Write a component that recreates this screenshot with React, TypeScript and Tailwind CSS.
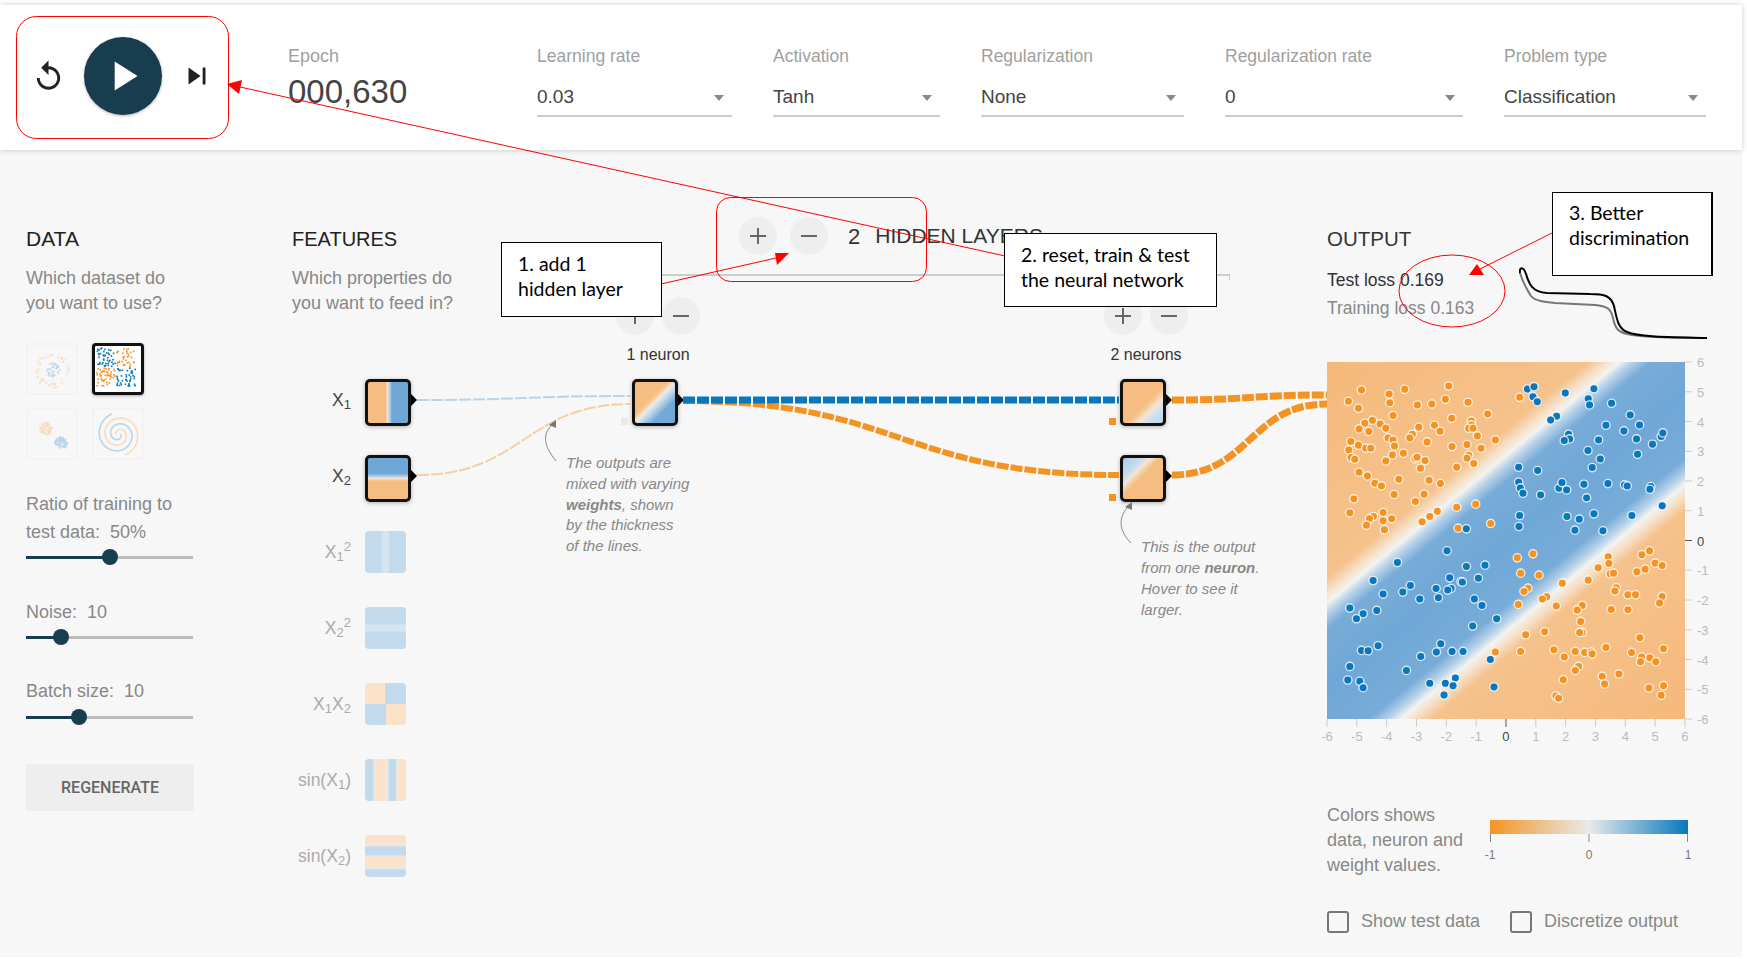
import React from 'react';
import { MdReplay, MdPlayArrow, MdSkipNext } from 'react-icons/md';

const ORANGE_DOTS = [
  [155,120],[285,118],[417,108],[116,154],[146,175],[238,132],[240,158],[323,165],[366,162],[407,148],[475,157],[534,192],[630,142],[250,197],[426,205],[165,220],[188,211],[211,222],[228,235],[148,237],[177,245],[374,226],[391,244],[327,232],[485,213],[485,225],[477,235],[490,235],[308,253],[300,264],[503,258],[557,270],[123,275],[235,264],[250,270],[352,276],[254,288],[472,284],[427,290],[146,286],[117,300],[168,295],[183,295],[514,295],[281,310],[248,315],[477,316],[472,325],[124,323],[135,328],[316,326],[322,322],[346,332],[228,333],[332,355],[441,352],[492,341],[148,367],[173,378],[267,388],[358,391],[195,400],[215,408],[392,401],[253,434],[343,433],[132,447],[317,455],[441,472],[498,463],[120,489],[220,488],[191,500],[179,507],[246,507],[220,513],[383,484],[360,500],[337,516],[170,526],[224,540],[445,535],[543,521],
  [896,621],[898,641],[866,654],[997,615],[1020,603],[1037,640],[1058,647],[1007,658],[982,666],[623,624],[670,612],[633,670],[688,676],[902,672],[912,670],[836,691],[758,700],[655,715],[643,725],[920,714],[916,724],[955,735],[978,735],[1058,740],[711,741],[698,748],[626,764],[740,769],[818,767],[803,781],[905,779],[955,780],[1050,760],[813,815],[818,848],[810,848],[705,846],[648,855],[991,864],[889,893],[1062,897],[733,900],[797,905],[825,908],[845,907],[848,913],[764,922],[966,908],[633,905],[557,907],[996,922],[1021,924],[993,936],[1039,936],[807,950],[797,962],[878,980],[928,973],[885,1003],[761,990],[1062,1008],[1018,1015],[739,1039],[747,1046],[1055,1037],
];

const BLUE_DOTS = [
  [653,117],[673,110],[670,140],[683,155],[767,129],[853,116],[836,146],[840,165],[906,160],[741,199],[723,210],[962,195],[889,226],[990,225],[943,243],[777,253],[780,267],[764,272],[867,270],[981,267],[1055,260],[1060,249],[1029,283],[835,302],[984,313],[872,327],[848,353],[627,352],[684,362],[627,397],[632,414],[640,430],[748,415],[757,398],[771,420],[823,403],[895,401],[945,405],[953,408],[693,435],[831,444],[1024,410],[1021,418],[1058,468],[630,497],[772,500],[809,508],[853,492],[967,497],[628,530],[796,541],[880,543],[470,537],
  [412,603],[263,638],[470,650],[526,646],[190,692],[420,684],[506,685],[454,695],[458,697],[302,707],[379,716],[424,716],[414,721],[279,727],[220,733],[386,744],[330,748],[494,748],[517,767],[120,775],[201,782],[160,792],[140,807],[561,807],[489,829],[393,882],[205,888],[155,902],[175,903],[380,907],[427,905],[460,905],[333,920],[542,929],[120,950],[290,962],[114,991],[150,995],[160,1014],[437,985],[407,1001],[360,1001],[430,1008],[553,1012],[403,1036],
];

const rng = (seed: number) => {
  let i = seed;
  return () => {
    i += 1;
    const v = Math.sin(i * 127.1 + seed * 311.7) * 43758.5453;
    return v - Math.floor(v);
  };
};

const scatter = (seed: number, count: number, pick: (a: number, b: number, c: number) => [number, number, string]) => {
  const next = rng(seed);
  return Array.from({ length: count }, () => pick(next(), next(), next()));
};

const circleDots = scatter(11, 100, (a, b, c) => {
  const inner = c < 0.45;
  const ang = b * Math.PI * 2;
  const r = inner ? Math.sqrt(a) * 8 : 14 + a * 5;
  return [25 + Math.cos(ang) * r, 26 + Math.sin(ang) * r, inner ? '#0877bd' : '#f59322'];
});

// quadrants: blue top left and bottom right, orange the other two
const xorDots = scatter(29, 170, (a, b) => {
  const x = 2 + a * 41;
  const y = 2 + b * 41;
  const sameSide = x < 22.5 === y < 22.5;
  return [x < 22.5 ? x - 0.8 : x + 0.8, y < 22.5 ? y - 0.8 : y + 0.8, sameSide ? '#0877bd' : '#f59322'];
});

const blobDots = scatter(47, 110, (a, b, c) => {
  const first = c < 0.5;
  const ang = b * Math.PI * 2;
  const r = Math.sqrt(a) * 6.5;
  const cx = first ? 18 : 34;
  const cy = first ? 19 : 34;
  return [cx + Math.cos(ang) * r, cy + Math.sin(ang) * r, first ? '#f59322' : '#0877bd'];
});

const spiralPath = (offset: number) => {
  const pts: string[] = [];
  for (let i = 0; i <= 70; i++) {
    const t = (i / 70) * Math.PI * 3.4;
    const r = 2 + t * 1.95;
    pts.push(`${(26 + Math.cos(t + offset) * r).toFixed(1)},${(26 + Math.sin(t + offset) * r).toFixed(1)}`);
  }
  return 'M' + pts.join(' L');
};

const Dots = ({ items, size }: { items: [number, number, string][]; size: number }) => (
  <svg viewBox="0 0 51 51" className="h-full w-full">
    {items.map((d, i) => (
      <rect key={i} x={d[0]} y={d[1]} width={size} height={size} fill={d[2]} />
    ))}
  </svg>
);

const Thumb = ({ children, selected }: { children: React.ReactNode; selected?: boolean }) => (
  <div
    className={
      selected
        ? 'h-[52px] w-[52px] overflow-hidden rounded-[4px] border-[3px] border-[#111] bg-white shadow-[0_1px_3px_rgba(0,0,0,0.3)]'
        : 'h-[52px] w-[52px] overflow-hidden rounded-[3px] border-2 border-[#f3f3f3]'
    }
  >
    {children}
  </div>
);

const Slider = ({ pos }: { pos: number }) => (
  <div className="relative h-4 w-[167px]">
    <div className="absolute inset-x-0 top-[6.5px] h-[3px] bg-[#bbb]" />
    <div className="absolute left-0 top-[6.5px] h-[3px] bg-[#183d4e]" style={{ width: pos }} />
    <div className="absolute top-0 h-4 w-4 rounded-full bg-[#183d4e]" style={{ left: pos - 8 }} />
  </div>
);

const Select = ({ label, value, width }: { label: string; value: string; width: string }) => (
  <div className={width}>
    <div className="h-[22px] text-[17.5px] leading-[22px] text-[#a0a0a0]">{label}</div>
    <div className="mt-[9px] flex h-[41px] items-center justify-between border-b-2 border-[#ccc] pr-[8px] pt-[4px] text-[19px] text-[#444]">
      <span>{value}</span>
      <span className="h-0 w-0 border-x-[5px] border-t-[6px] border-x-transparent border-t-[#888]" />
    </div>
  </div>
);

const features = [
  { label: <>X<sub>1</sub></>, active: true, bg: 'bg-[linear-gradient(90deg,#f5bd80_0%,#f5bd80_44%,#f3e4d2_49%,#b5d1e8_54%,#6fa8d6_60%,#6fa8d6_100%)]' },
  { label: <>X<sub>2</sub></>, active: true, bg: 'bg-[linear-gradient(180deg,#6fa8d6_0%,#6fa8d6_38%,#b5d1e8_45%,#f3e4d2_50%,#f5bd80_56%,#f5bd80_100%)]' },
  { label: <>X<sub>1</sub><sup>2</sup></>, bg: 'bg-[linear-gradient(90deg,#c3daec_0%,#c3daec_38%,#d6e5f1_44%,#d6e5f1_56%,#c3daec_62%,#c3daec_100%)]' },
  { label: <>X<sub>2</sub><sup>2</sup></>, bg: 'bg-[linear-gradient(180deg,#c3daec_0%,#c3daec_38%,#d6e5f1_44%,#d6e5f1_56%,#c3daec_62%,#c3daec_100%)]' },
  { label: <>X<sub>1</sub>X<sub>2</sub></>, bg: 'bg-[conic-gradient(#c3daec_0_25%,#fbe2c8_25%_50%,#c3daec_50%_75%,#fbe2c8_75%_100%)]' },
  { label: <>sin(X<sub>1</sub>)</>, bg: 'bg-[linear-gradient(90deg,#c3daec_0%,#c3daec_18%,#edeae6_24%,#fbe2c8_30%,#fbe2c8_48%,#edeae6_54%,#c3daec_60%,#c3daec_74%,#edeae6_78%,#fbe2c8_84%,#fbe2c8_100%)]' },
  { label: <>sin(X<sub>2</sub>)</>, bg: 'bg-[linear-gradient(180deg,#fbe2c8_0%,#fbe2c8_16%,#edeae6_24%,#c3daec_30%,#c3daec_46%,#edeae6_52%,#fbe2c8_56%,#fbe2c8_72%,#edeae6_78%,#c3daec_84%,#c3daec_100%)]' },
];

const NodeBox = ({ bg, bias }: { bg: string; bias?: string }) => (
  <div className="relative h-[47px] w-[52px]">
    <div className={`h-[47px] w-[46px] rounded-[5px] border-[3px] border-[#111] shadow-[0_1px_4px_rgba(0,0,0,0.3)] ${bg}`} />
    <span className="absolute right-0 top-[15px] h-0 w-0 border-y-[6px] border-l-[6px] border-y-transparent border-l-black" />
    {bias && <span className={`absolute -left-[11px] top-[39px] h-[7px] w-[7px] ${bias}`} />}
  </div>
);

const RoundBtn = ({ sign }: { sign: string }) => (
  <div className="flex h-[38px] w-[38px] items-center justify-center rounded-full bg-[#eee] text-[#666]">
    {sign === '+' ? (
      <svg width="16" height="16" viewBox="0 0 16 16"><path d="M8 0v16M0 8h16" stroke="currentColor" strokeWidth="2" /></svg>
    ) : (
      <svg width="16" height="16" viewBox="0 0 16 16"><path d="M0 8h16" stroke="currentColor" strokeWidth="2" /></svg>
    )}
  </div>
);

const Layer = ({ label, children }: { label: string; children: React.ReactNode }) => (
  <div className="flex w-[84px] flex-col items-center">
    <div className="flex gap-2">
      <RoundBtn sign="+" />
      <RoundBtn sign="-" />
    </div>
    <div className="mt-[10px] whitespace-nowrap text-[16px] leading-5 text-[#333]">{label}</div>
    <div className="mt-[14px] flex flex-col gap-[29px]">{children}</div>
  </div>
);

const AXIS = [-6, -5, -4, -3, -2, -1, 0, 1, 2, 3, 4, 5, 6];

const Heatmap = () => (
  <div className="relative h-[357px] w-[358px] bg-[linear-gradient(140.5deg,#f5b97a_0%,#f5c28c_33%,#f6e2cc_35.5%,#f3f3f0_37%,#b9d3e9_38.5%,#78acd8_41%,#6fa7d6_50%,#78acd8_60%,#b9d3e9_62.5%,#f3f3f0_64%,#f6e2cc_65.5%,#f5c28c_68%,#f5b97a_100%)]">
    <svg viewBox="52 36 1074 1072" className="absolute inset-0 h-full w-full">
      {ORANGE_DOTS.map(([x, y], i) => (
        <circle key={i} cx={x} cy={y} r={12.5} fill="#f59322" stroke="#fff" strokeOpacity={0.8} strokeWidth={4} />
      ))}
      {BLUE_DOTS.map(([x, y], i) => (
        <circle key={i} cx={x} cy={y} r={12.5} fill="#0877bd" stroke="#fff" strokeOpacity={0.8} strokeWidth={4} />
      ))}
    </svg>
    {/* axis ticks and numbers around the plot */}
    <svg width="400" height="400" className="absolute left-0 top-0 overflow-visible text-[13px]">
      {AXIS.map((v) => {
        const x = (v + 6) * 29.83;
        const y = (6 - v) * 29.75;
        const zero = v === 0;
        return (
          <g key={v} fill={zero ? '#444' : '#bbb'}>
            <line x1={358} x2={365} y1={y} y2={y} stroke={zero ? '#555' : '#ccc'} />
            <text x={370} y={y + 5}>{v}</text>
            <line x1={x} x2={x} y1={357} y2={365} stroke={zero ? '#555' : '#ccc'} />
            <text x={x} y={379} textAnchor="middle">{v}</text>
          </g>
        );
      })}
    </svg>
  </div>
);

const Checkbox = ({ label, width }: { label: string; width?: string }) => (
  <div className={`flex items-center gap-3 ${width ?? ''}`}>
    <span className="h-[22px] w-[22px] rounded-[3px] border-[2.5px] border-[#777]" />
    <span className="whitespace-nowrap text-[18px] text-[#888]">{label}</span>
  </div>
);

const Callout = ({ className, lines }: { className: string; lines: string[] }) => (
  <div className={`absolute border border-black bg-white font-['Lato',sans-serif] text-[19.5px] leading-[24.5px] text-black ${className}`}>
    {lines.map((l) => (
      <div key={l}>{l}</div>
    ))}
  </div>
);

const App: React.FC = () => {
  return (
    <div className="relative h-[959px] w-[1747px] overflow-hidden bg-white font-['Liberation_Sans',sans-serif]">
      <div className="h-[957px] w-[1742px] bg-[#f7f7f7] pt-[5px]">
        {/* Top bar */}
        <div className="relative z-20 -mt-[5px] mb-0 h-[150px] bg-white pt-[5px]">
          <header className="flex h-[145px] items-start bg-white shadow-[0_0_6px_rgba(0,0,0,0.2)]">
            <div className="flex h-[142px] w-[288px] items-center">
              <MdReplay size={35} className="ml-[31px] text-[#222]" />
              <div className="ml-[18px] flex h-[78px] w-[78px] items-center justify-center rounded-full bg-[#183d4e] shadow-[0_1px_3px_rgba(0,0,0,0.3)]">
                <MdPlayArrow size={50} className="text-white" />
              </div>
              <MdSkipNext size={34} className="ml-[18px] text-[#222]" />
            </div>
            <div className="flex gap-[41px] pt-[40px]">
              <div className="w-[208px]">
                <div className="h-[22px] text-[18px] leading-[22px] text-[#a0a0a0]">Epoch</div>
                <div className="mt-[7px] text-[33px] leading-9 text-[#444]">000,630</div>
              </div>
              <Select label="Learning rate" value="0.03" width="w-[195px]" />
              <Select label="Activation" value="Tanh" width="w-[167px]" />
              <Select label="Regularization" value="None" width="w-[203px]" />
              <Select label="Regularization rate" value="0" width="w-[238px]" />
              <Select label="Problem type" value="Classification" width="w-[202px]" />
            </div>
          </header>
        </div>

        {/* Main columns */}
        <main className="relative z-10 flex pt-[76px]">
          <section className="w-[292px] pl-[26px]">
            <h2 className="text-[21px] leading-[26px] text-[#222]">DATA</h2>
            <p className="mt-[14px] text-[18px] leading-[25px] text-[#888]">Which dataset do<br />you want to use?</p>
            <div className="mt-[27px] grid w-[120px] grid-cols-[52px_52px] gap-x-[14px] gap-y-[13px]">
              <Thumb>
                <div className="h-full w-full opacity-25"><Dots items={circleDots} size={1.6} /></div>
              </Thumb>
              <Thumb selected>
                <Dots items={xorDots} size={1.8} />
              </Thumb>
              <Thumb>
                <div className="h-full w-full opacity-25"><Dots items={blobDots} size={2} /></div>
              </Thumb>
              <Thumb>
                <svg viewBox="0 0 51 51" className="h-full w-full opacity-25" fill="none" strokeWidth="1.8">
                  <path d={spiralPath(0)} stroke="#0877bd" />
                  <path d={spiralPath(Math.PI)} stroke="#f59322" />
                </svg>
              </Thumb>
            </div>
            <p className="mt-[31px] text-[18px] leading-[27.5px] text-[#888]">Ratio of training to<br />test data:&nbsp; 50%</p>
            <div className="mt-[3px]"><Slider pos={84} /></div>
            <p className="mt-[34px] text-[18px] leading-[27px] text-[#888]">Noise:&nbsp; 10</p>
            <div className="mt-[3px]"><Slider pos={35} /></div>
            <p className="mt-[33px] text-[18px] leading-[27px] text-[#888]">Batch size:&nbsp; 10</p>
            <div className="mt-1"><Slider pos={53} /></div>
            <button className="mt-[39px] h-[47px] w-[168px] rounded-[3px] bg-[#eee] font-['Roboto',sans-serif] text-[16px] font-medium text-[#666]">REGENERATE</button>
          </section>

          <section className="w-[170px]">
            <h2 className="text-[20px] leading-[26px] text-[#222]">FEATURES</h2>
            <p className="mt-[14px] whitespace-nowrap text-[18px] leading-[25px] text-[#888]">Which properties do<br />you want to feed in?</p>
            <div className="mt-[63px]">
              {features.map((f, i) => (
                <div key={i} className="flex h-[76px] items-start gap-[14px]">
                  <div className={`flex h-[42px] w-[59px] items-center justify-end whitespace-nowrap text-[17.5px] ${f.active ? 'text-[#444]' : 'text-[#aaa]'}`}>
                    <span>{f.label}</span>
                  </div>
                  {f.active ? (
                    <NodeBox bg={f.bg} />
                  ) : (
                    <div className={`h-[42px] w-[41px] rounded-[4px] ${f.bg}`} />
                  )}
                </div>
              ))}
            </div>
          </section>

          <section className="-mt-[9px] w-[865px]">
            <div className="flex items-center pl-[277px]">
              <div className="flex gap-[13px]">
                <RoundBtn sign="+" />
                <RoundBtn sign="-" />
              </div>
              <span className="ml-5 text-[22px] text-[#333]">2</span>
              <span className="ml-[15px] whitespace-nowrap text-[21px] text-[#333]">HIDDEN LAYERS</span>
            </div>
            <div className="ml-[188px] mt-[19px] h-[6px] w-[580px] border-r border-t-2 border-[#ccc]" />
            <div className="mt-[17px] flex gap-[404px] pl-[154px]">
              <Layer label="1 neuron">
                <NodeBox bias="bg-[#e8e8e8]" bg="bg-[linear-gradient(135deg,#f5bd80_0%,#f5bd80_40%,#f3e6d8_49%,#d3e3f0_54%,#72a9d7_72%,#6fa8d6_100%)]" />
              </Layer>
              <Layer label="2 neurons">
                <NodeBox bias="bg-[#f59322]" bg="bg-[linear-gradient(135deg,#f5bd80_0%,#f5bd80_55%,#f3e5d6_70%,#cfe1ef_80%,#b8d4ea_100%)]" />
                <NodeBox bias="bg-[#f59322]" bg="bg-[linear-gradient(135deg,#a9cbe5_0%,#c6dcee_24%,#f3e5d6_34%,#f5bd80_46%,#f5bd80_100%)]" />
              </Layer>
            </div>
          </section>

          <section className="w-[415px]">
            <h2 className="text-[20.5px] leading-[26px] text-[#333]">OUTPUT</h2>
            <div className="mt-[14px] flex h-[96px] items-start">
              <div className="w-[192px] text-[17.5px] leading-[28px]">
                <div className="text-[#333]">Test loss 0.169</div>
                <div className="text-[#888]">Training loss 0.163</div>
              </div>
              <svg width="188" height="75" viewBox="1519 266 188 75" fill="none" className="shrink-0">
                <path d="M1520,273 C1522,280 1526,288 1531,296 C1535,301 1545,302 1555,303 L1595,305 C1606,306 1611,308 1613,318 C1615,328 1618,332 1627,334 C1640,337 1665,338 1707,338" stroke="#777" strokeWidth="2" />
                <path d="M1520,273 C1519,266 1524,267 1526,274 C1529,284 1532,292 1547,293 L1590,294 C1605,294 1611,296 1614,306 C1617,320 1618,328 1627,332 C1640,337 1665,337 1707,338" stroke="#000" strokeWidth="2" />
              </svg>
            </div>
            <Heatmap />
            <div className="mt-[84px] flex">
              <p className="w-[163px] text-[18px] leading-[25px] text-[#888]">Colors shows<br />data, neuron and<br />weight values.</p>
              <div className="mt-[17px] w-[198px]">
                <div className="h-[14px] bg-[linear-gradient(90deg,#f59322_0%,#e8eaeb_50%,#0877bd_100%)]" />
                <svg width="198" height="30" className="overflow-visible text-[12px]" fill="#777">
                  <path d="M0.5 0v8M99 0v8M197.5 0v8" stroke="#888" />
                  <text x="0" y="25" textAnchor="middle">-1</text>
                  <text x="99" y="25" textAnchor="middle">0</text>
                  <text x="198" y="25" textAnchor="middle">1</text>
                </svg>
              </div>
            </div>
            <div className="mt-[30px] flex">
              <Checkbox label="Show test data" width="w-[183px]" />
              <Checkbox label="Discretize output" />
            </div>
          </section>
        </main>
      </div>

      {/* Links between the nodes */}
      <svg width="1747" height="959" className="pointer-events-none absolute left-0 top-0 z-10" fill="none" strokeDasharray="12 2">
        <path d="M417,400 C524,400 524,396 631,396" stroke="#b9d3e8" strokeWidth="2" />
        <path d="M417,475 C524,475 524,404 631,404" stroke="#f2cfa4" strokeWidth="2" />
        <path d="M683,401 C900,401 900,475 1119,475" stroke="#f59322" strokeWidth="6" />
        <path d="M683,400 L1119,400" stroke="#0877bd" strokeWidth="7" />
        <path d="M1172,400 C1250,400 1250,395 1327,395" stroke="#f59322" strokeWidth="7" />
        <path d="M1172,475 C1250,475 1250,404 1327,404" stroke="#f59322" strokeWidth="7" />
      </svg>

      {/* Notes on the diagram */}
      <div className="absolute left-[566px] top-[453px] z-20 whitespace-nowrap text-[15px] italic leading-[20.8px] text-[#888]">
        The outputs are<br />mixed with varying<br /><b>weights</b>, shown<br />by the thickness<br />of the lines.
      </div>
      <div className="absolute left-[1141px] top-[535.5px] z-20 whitespace-nowrap text-[15px] italic leading-[21px] text-[#888]">
        This is the output<br />from one <b>neuron</b>.<br />Hover to see it<br />larger.
      </div>

      {/* Red review marks */}
      <svg width="1747" height="959" className="pointer-events-none absolute left-0 top-0 z-30" fill="none">
        <path d="M556,461 C544,446 541,434 554,423" stroke="#888" strokeWidth="1" />
        <path d="M556,420 L549,425 L556,428 Z" fill="#777" />
        <path d="M1131,543 C1119,531 1117,517 1130,505" stroke="#888" strokeWidth="1" />
        <path d="M1132,502 L1125,507 L1132,510 Z" fill="#777" />
        <rect x="16.5" y="16.5" width="212" height="122" rx="20" stroke="#f00" />
        <rect x="716.5" y="197.5" width="210" height="84" rx="14" stroke="#f00" />
        <ellipse cx="1452" cy="291" rx="53" ry="36" stroke="#f00" />
        <path d="M1005,256 L240,87" stroke="#f00" strokeWidth="1" />
        <path d="M227,84 L242,80 L239,94 Z" fill="#f00" />
        <path d="M661,284 L776,258" stroke="#f00" strokeWidth="1" />
        <path d="M789,253 L775,253 L777,265 Z" fill="#f00" />
        <path d="M1552,233 L1478,270" stroke="#f00" strokeWidth="1" />
        <path d="M1469,275 L1484,275 L1477,264 Z" fill="#f00" />
      </svg>

      <Callout className="left-[501px] top-[242px] z-40 h-[75px] w-[161px] pl-[16px] pt-[9px]" lines={['1. add 1', 'hidden layer']} />
      <Callout className="left-[1004px] top-[233px] z-40 h-[74px] w-[213px] pl-[16px] pt-[9px]" lines={['2. reset, train & test', 'the neural network']} />
      <Callout className="left-[1552px] top-[192px] z-40 h-[84px] w-[161px] border-r-2 pl-[16px] pt-[8px]" lines={['3. Better', 'discrimination']} />
    </div>
  );
};

export default App;
